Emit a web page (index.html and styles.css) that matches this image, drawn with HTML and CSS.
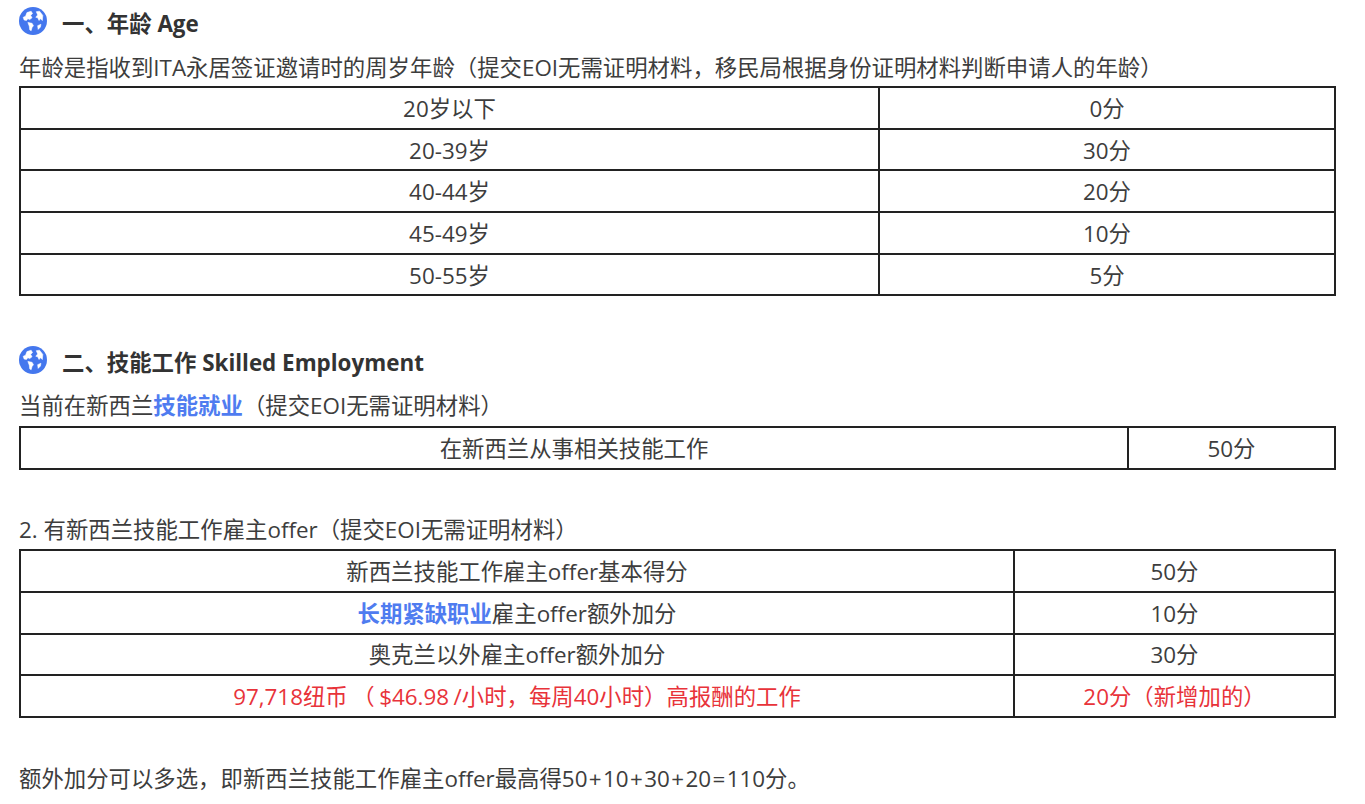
FILE: index.html
```html
<!DOCTYPE html>
<html lang="zh-CN">
<head>
<meta charset="utf-8">
<title>Points</title>
<link rel="stylesheet" href="styles.css">
</head>
<body>
<main class="page">
  <h2 class="heading heading-first">
    <svg class="globe" viewBox="0 0 30 30"><circle class="globe-sea" cx="15" cy="15" r="15"/><path fill="#fff" stroke="#fff" stroke-width=".6" stroke-linejoin="round" d="M4.500 11 7 10 8.500 6 13 4.500 14.500 7 12.500 9 14 11.500 11.500 13.500 9.500 12.500 8 14.500 5.500 14ZM9.500 16.500 14 17.500 15.500 20 14 22 13 25.500 11.500 24.500 11 20.500ZM18.500 5 22 4.500 25.500 9 25 14.500 23 12.500 21.500 14.500 20 11.500 18 11 20 8.500ZM20 20 23.500 18.500 23 21.500 20.500 24Z"/></svg>
    <span class="heading-text">一、年龄 Age</span>
  </h2>
  <p class="text">年龄是指收到ITA永居签证邀请时的周岁年龄（提交EOI无需证明材料，移民局根据身份证明材料判断申请人的年龄）</p>
  <table class="grid">
    <colgroup><col class="c-age-a"><col></colgroup>
    <tr><td>20岁以下</td><td>0分</td></tr>
    <tr><td>20-39岁</td><td>30分</td></tr>
    <tr><td>40-44岁</td><td>20分</td></tr>
    <tr><td>45-49岁</td><td>10分</td></tr>
    <tr><td>50-55岁</td><td>5分</td></tr>
  </table>

  <h2 class="heading heading-second">
    <svg class="globe" viewBox="0 0 30 30"><circle class="globe-sea" cx="15" cy="15" r="15"/><path fill="#fff" stroke="#fff" stroke-width=".6" stroke-linejoin="round" d="M4.500 11 7 10 8.500 6 13 4.500 14.500 7 12.500 9 14 11.500 11.500 13.500 9.500 12.500 8 14.500 5.500 14ZM9.500 16.500 14 17.500 15.500 20 14 22 13 25.500 11.500 24.500 11 20.500ZM18.500 5 22 4.500 25.500 9 25 14.500 23 12.500 21.500 14.500 20 11.500 18 11 20 8.500ZM20 20 23.500 18.500 23 21.500 20.500 24Z"/></svg>
    <span class="heading-text">二、技能工作 Skilled Employment</span>
  </h2>
  <p class="text text-tight">当前在新西兰<strong class="link">技能就业</strong>（提交EOI无需证明材料）</p>
  <table class="grid grid-skill">
    <colgroup><col class="c-skill-a"><col></colgroup>
    <tr><td>在新西兰从事相关技能工作</td><td>50分</td></tr>
  </table>

  <p class="text text-gap">2. 有新西兰技能工作雇主offer（提交EOI无需证明材料）</p>
  <table class="grid grid-offer">
    <colgroup><col class="c-offer-a"><col></colgroup>
    <tr><td>新西兰技能工作雇主offer基本得分</td><td>50分</td></tr>
    <tr><td><strong class="link">长期紧缺职业</strong>雇主offer额外加分</td><td>10分</td></tr>
    <tr><td>奥克兰以外雇主offer额外加分</td><td>30分</td></tr>
    <tr class="red"><td>97,718纽币 （ $46.98 /小时，每周40小时）高报酬的工作</td><td>20分（新增加的）</td></tr>
  </table>

  <p class="text text-end">额外加分可以多选，即新西兰技能工作雇主offer最高得50<span class="op">+</span>10<span class="op">+</span>30<span class="op">+</span>20<span class="op">=</span>110分。</p>
</main>
</body>
</html>
```
FILE: styles.css
```css
html, body {
  margin: 0;
  padding: 0;
  background: #fff;
  overflow: hidden;
}
body {
  font-family: "Open Sans", "Noto Sans CJK SC", sans-serif;
  font-size: 22.4px;
  color: #3d3d3d;
}
.page {
  width: 1317px;
  margin-left: 19px;
}
.heading {
  display: flex;
  align-items: center;
  gap: 15px;
  margin: 0;
  height: 30px;
  font-size: 22.4px;
  font-weight: 700;
  line-height: 30px;
  color: #333;
}
.heading-first { margin-top: 7px; }
.heading-second { margin-top: 50px; }
.heading-text { padding-top: 4px; }
.globe {
  width: 28px;
  height: 28px;
  flex: none;
  margin-bottom: 2px;
}
.globe-sea { fill: #4477ee; }
.text {
  box-sizing: border-box;
  margin: 0;
  height: 30px;
  padding-top: 1px;
  line-height: 30px;
  white-space: nowrap;
}
.heading-first + .text { margin-top: 15px; }
.text-tight { margin-top: 14px; }
.text-gap { margin-top: 44px; }
.text-end { margin-top: 45px; }
.op { margin: 0 1.4px; }
.grid {
  width: 1317px;
  margin-top: 4px;
  border-collapse: collapse;
  table-layout: fixed;
}
.grid-skill { margin-top: 6px; }
.grid-offer { margin-top: 5px; }
.grid td {
  height: 41.7px;
  padding: 2px 0 0;
  border: 2px solid #222;
  text-align: center;
  line-height: 30px;
  box-sizing: border-box;
}
.c-age-a { width: 859px; }
.c-skill-a { width: 1108px; }
.c-offer-a { width: 994px; }
.link {
  color: #4f7cf0;
  font-weight: 700;
}
.red td {
  color: #e8333a;
  word-spacing: -1.3px;
}
```
